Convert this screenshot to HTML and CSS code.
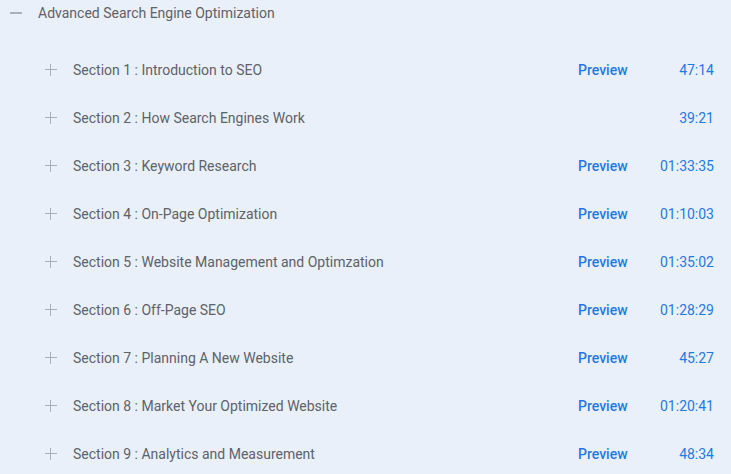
FILE: index.html
```html
<!DOCTYPE html>
<html lang="en">
  <head>
    <meta charset="utf-8" />
    <title>Course Curriculum</title>
    <link rel="stylesheet" href="styles.css">
  </head>
  <body>
    <div class="course">
      <!-- course title -->
      <div class="course-head">
        <span class="toggle minus"></span>
        <span class="course-title">Advanced Search Engine Optimization</span>
      </div>

      <ul class="sections">
        <li class="section">
          <span class="toggle plus"></span>
          <span class="section-name">Section 1 : Introduction to SEO</span>
          <a class="preview" href="#">Preview</a>
          <span class="duration">47:14</span>
        </li>
        <li class="section">
          <span class="toggle plus"></span>
          <span class="section-name">Section 2 : How Search Engines Work</span>
          <span></span>
          <span class="duration">39:21</span>
        </li>
        <li class="section">
          <span class="toggle plus"></span>
          <span class="section-name">Section 3 : Keyword Research</span>
          <a class="preview" href="#">Preview</a>
          <span class="duration">01:33:35</span>
        </li>
        <li class="section">
          <span class="toggle plus"></span>
          <span class="section-name">Section 4 : On-Page Optimization</span>
          <a class="preview" href="#">Preview</a>
          <span class="duration">01:10:03</span>
        </li>
        <li class="section">
          <span class="toggle plus"></span>
          <span class="section-name">Section 5 : Website Management and Optimzation</span>
          <a class="preview" href="#">Preview</a>
          <span class="duration">01:35:02</span>
        </li>
        <li class="section">
          <span class="toggle plus"></span>
          <span class="section-name">Section 6 : Off-Page SEO</span>
          <a class="preview" href="#">Preview</a>
          <span class="duration">01:28:29</span>
        </li>
        <li class="section">
          <span class="toggle plus"></span>
          <span class="section-name">Section 7 : Planning A New Website</span>
          <a class="preview" href="#">Preview</a>
          <span class="duration">45:27</span>
        </li>
        <li class="section">
          <span class="toggle plus"></span>
          <span class="section-name">Section 8 : Market Your Optimized Website</span>
          <a class="preview" href="#">Preview</a>
          <span class="duration">01:20:41</span>
        </li>
        <li class="section">
          <span class="toggle plus"></span>
          <span class="section-name">Section 9 : Analytics and Measurement</span>
          <a class="preview" href="#">Preview</a>
          <span class="duration">48:34</span>
        </li>
      </ul>
    </div>
  </body>
</html>
```

FILE: styles.css
```css
html,
body {
  margin: 0;
  padding: 0;
  background: #e9f0f9;
}
body {
  font-family: Roboto, "Liberation Sans", sans-serif;
  font-size: 14px;
  color: #5e6269;
}
.course-head {
  display: flex;
  align-items: center;
  gap: 16px;
  height: 26px;
  padding-left: 10px;
}
.course-title {
  line-height: 20px;
}
.toggle {
  position: relative;
  display: inline-block;
  width: 12px;
  height: 12px;
  flex: none;
}
.toggle::before,
.toggle::after {
  content: "";
  position: absolute;
  background: #a9b0bb;
}
.toggle::before {
  left: 0;
  right: 0;
  top: 5px;
  height: 2px;
}
.plus::after {
  top: 0;
  bottom: 0;
  left: 5px;
  width: 1px;
}
.plus::before {
  height: 1px;
  top: 5px;
}
.sections {
  list-style: none;
  margin: 20px 0 0;
  padding: 0;
}
.section {
  display: grid;
  grid-template-columns: 12px 1fr 50px 70px;
  column-gap: 16px;
  align-items: center;
  height: 48px;
  padding: 0 17px 0 45px;
}
.section .preview {
  grid-column: 3;
  color: #1f7ae6;
  font-weight: 500;
  text-decoration: none;
  white-space: nowrap;
}
.section .duration {
  grid-column: 4;
  color: #1f7ae6;
  text-align: right;
}
.section .section-name {
  white-space: nowrap;
}
```
